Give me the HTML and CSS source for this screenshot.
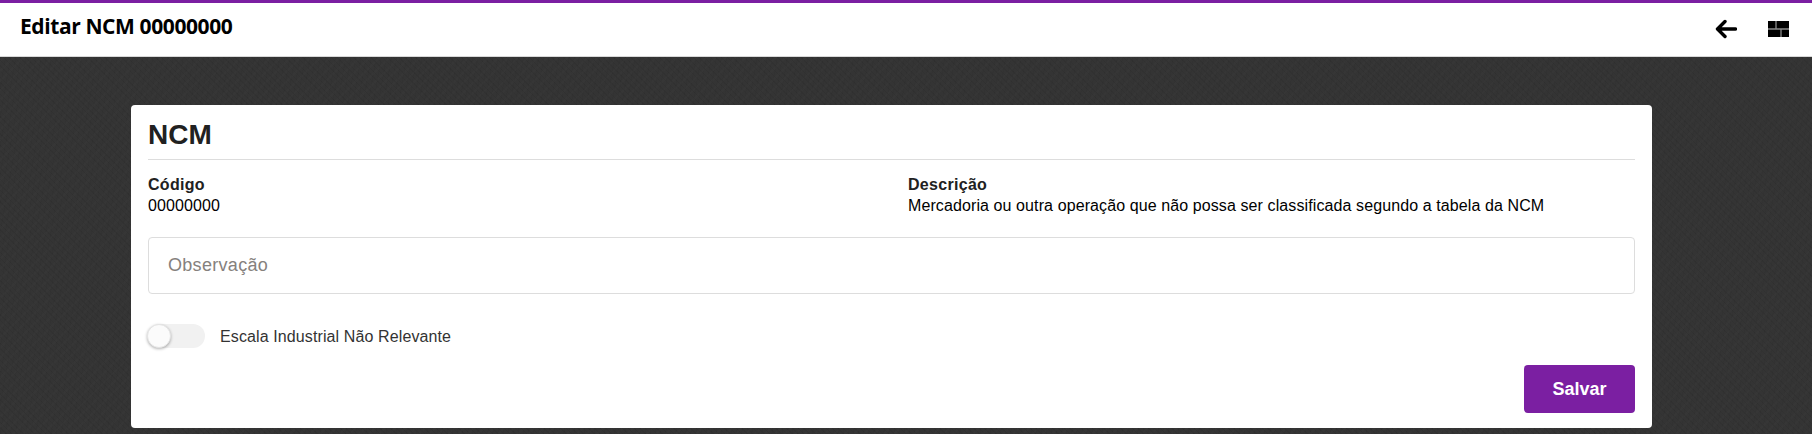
FILE: index.html
```html
<!DOCTYPE html>
<html lang="pt-BR">
  <head>
    <meta charset="UTF-8" />
    <title>Editar NCM 00000000</title>
    <link rel="stylesheet" href="styles.css">
  </head>
  <body>
    <header class="topbar">
      <h1 class="page-title">Editar NCM 00000000</h1>
      <div class="topbar-actions">
        <svg class="icon-back" width="22" height="20" viewBox="0 0 22 20">
          <path d="M10 2.500 2.500 10 10 17.500M3 10H20.500" fill="none" stroke="#000" stroke-width="3.400" stroke-linecap="round" stroke-linejoin="round" />
        </svg>
        <svg class="icon-panels" width="21" height="16" viewBox="0 0 21 16">
          <rect width="21" height="16" fill="#000" />
          <path d="M0 8H21M8 0V8M13 8V16" fill="none" stroke="#8a8a8a" stroke-width="1.300" />
        </svg>
      </div>
    </header>

    <main class="content">
      <section class="card">
        <h2 class="card-title">NCM</h2>
        <div class="details">
          <div class="detail detail-code">
            <div class="detail-label">Código</div>
            <div class="detail-value">00000000</div>
          </div>
          <div class="detail">
            <div class="detail-label">Descrição</div>
            <div class="detail-value">Mercadoria ou outra operação que não possa ser classificada segundo a tabela da NCM</div>
          </div>
        </div>
        <input class="field" type="text" placeholder="Observação" />
        <label class="switch-row">
          <span class="switch"><span class="switch-knob"></span></span>
          <span class="switch-label">Escala Industrial Não Relevante</span>
        </label>
        <div class="form-actions">
          <button class="save-button" type="button">Salvar</button>
        </div>
      </section>
    </main>
  </body>
</html>
```

FILE: styles.css
```css
html,
body {
  height: 100%;
}
body {
  margin: 0;
  overflow: hidden;
  font-family: "Liberation Sans", Arial, sans-serif;
  color: #212121;
  background-color: #343434;
  background-image:
    repeating-linear-gradient(135deg, rgba(255, 255, 255, 0.012) 0 2px, transparent 2px 7px),
    repeating-linear-gradient(45deg, rgba(0, 0, 0, 0.05) 0 1px, transparent 1px 4px),
    repeating-linear-gradient(100deg, rgba(0, 0, 0, 0.03) 0 1px, transparent 1px 5px);
}
.topbar {
  display: flex;
  align-items: flex-start;
  justify-content: space-between;
  box-sizing: border-box;
  height: 57px;
  padding: 0 23px 0 20px;
  background-color: #fff;
  border-top: 3px solid #7b1fa2;
  border-bottom: 1px solid #d8d8d8;
}
.page-title {
  margin: 0;
  padding-top: 10px;
  font-family: "Open Sans", "Noto Sans", sans-serif;
  font-size: 21px;
  line-height: 26px;
  font-weight: 700;
  letter-spacing: -0.4px;
  color: #000;
}
.topbar-actions {
  display: flex;
  align-items: center;
  gap: 31px;
  padding-top: 16px;
}
.content {
  padding: 48px 160px 0 131px;
}
.card {
  box-sizing: border-box;
  height: 323px;
  padding: 11px 17px 16px;
  background-color: #fff;
  border-radius: 4px;
}
.card-title {
  margin: 0;
  height: 43px;
  font-size: 28px;
  line-height: 38px;
  font-weight: 700;
  color: #212121;
  border-bottom: 1px solid #ddd;
}
.details {
  display: flex;
  margin-top: 15px;
}
.detail-code {
  flex: 0 0 760px;
}
.detail-label {
  font-size: 16px;
  line-height: 20px;
  font-weight: 700;
  letter-spacing: 0.3px;
}
.detail-value {
  font-size: 16px;
  line-height: 21px;
  letter-spacing: 0.1px;
  color: #000;
}
.field {
  display: block;
  box-sizing: border-box;
  width: 100%;
  height: 57px;
  margin-top: 21px;
  padding: 0 19px;
  font-family: "Liberation Sans", Arial, sans-serif;
  font-size: 18px;
  letter-spacing: 0.3px;
  border: 1px solid #ddd;
  border-radius: 4px;
  outline: none;
}
.field::placeholder {
  color: #85817d;
}
.switch-row {
  display: flex;
  align-items: center;
  gap: 15px;
  margin-top: 30px;
}
.switch {
  position: relative;
  display: block;
  width: 57px;
  height: 24px;
  background-color: #f1f1f1;
  border-radius: 12px;
}
.switch-knob {
  position: absolute;
  left: -1px;
  top: 0;
  width: 22px;
  height: 22px;
  background-color: #fbfbfb;
  border: 1px solid #e4e4e4;
  border-radius: 50%;
  box-shadow: 0 1px 3px rgba(0, 0, 0, 0.3);
}
.switch-label {
  padding-top: 2px;
  font-size: 16px;
  letter-spacing: 0.11px;
  color: #333;
}
.form-actions {
  display: flex;
  justify-content: flex-end;
  margin-top: 17px;
}
.save-button {
  width: 111px;
  height: 48px;
  font-family: inherit;
  font-size: 18px;
  font-weight: 700;
  color: #fff;
  background-color: #7b1fa2;
  border: none;
  border-radius: 4px;
}
```
